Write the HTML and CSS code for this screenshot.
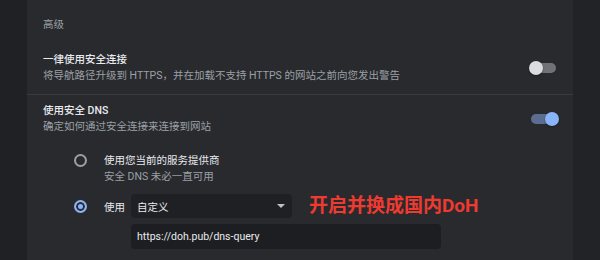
FILE: index.html
```html
<!DOCTYPE html>
<html lang="zh-CN">
<head>
  <meta charset="UTF-8">
  <title>隐私设置 - 高级</title>
  <link rel="stylesheet" href="styles.css">
</head>
<body>
  <div class="page">
    <div class="side"></div>

    <div class="card">
      <div class="section-title">高级</div>

      <div class="row">
        <div class="row-text">
          <div class="label">一律使用安全连接</div>
          <div class="sub">将导航路径升级到 HTTPS，并在加载不支持 HTTPS 的网站之前向您发出警告</div>
        </div>
        <span class="toggle"></span>
      </div>

      <div class="row divided">
        <div class="row-text">
          <div class="label">使用安全 DNS</div>
          <div class="sub">确定如何通过安全连接来连接到网站</div>
        </div>
        <span class="toggle on"></span>
      </div>

      <div class="dns-options">
        <div class="option">
          <span class="radio"></span>
          <div class="row-text">
            <div class="label plain">使用您当前的服务提供商</div>
            <div class="sub">安全 DNS 未必一直可用</div>
          </div>
        </div>

        <div class="option custom">
          <span class="radio checked"></span>
          <div class="custom-grid">
            <span class="label plain">使用</span>
            <div class="select-row">
              <div class="select">
                <span>自定义</span>
                <span class="arrow"></span>
              </div>
              <span class="note">开启并换成国内DoH</span>
            </div>
            <div class="input">https://doh.pub/dns-query</div>
          </div>
        </div>
      </div>
    </div>

    <div class="side right"></div>
  </div>
</body>
</html>
```

FILE: styles.css
```css
body {
  margin: 0;
  background-color: #202124;
  font-family: Roboto, "Noto Sans CJK SC", sans-serif;
  font-size: 10.5px;
  color: #e8eaed;
}

.page {
  display: flex;
  height: 260px;
  overflow: hidden;
}

.side {
  width: 27px;
  flex-shrink: 0;
  background-color: #202124;
}

.side.right {
  background-color: #222326;
}

.card {
  flex: 1;
  background-color: #292a2d;
}

.section-title {
  color: #9aa0a6;
  padding: 17px 16px 7px;
  line-height: 16px;
}

.row {
  display: flex;
  align-items: center;
  justify-content: space-between;
  padding: 12px 16px 10px;
}

.row.divided {
  border-top: 1px solid #3a3b3e;
  padding-top: 8px;
  padding-bottom: 8px;
}

.row-text {
  line-height: 16px;
}

.label {
  font-weight: 500;
  color: #e8eaed;
}

.label.plain {
  font-weight: 400;
}

.sub {
  color: #9aa0a6;
}

.toggle {
  position: relative;
  width: 26px;
  height: 10px;
  border-radius: 5px;
  background-color: #6f7378;
  margin-right: 1px;
}

.toggle::after {
  content: "";
  position: absolute;
  top: -2px;
  left: -1px;
  width: 14px;
  height: 14px;
  border-radius: 50%;
  background-color: #dadce0;
  box-shadow: 0 1px 2px rgba(0, 0, 0, 0.4);
}

.toggle.on {
  background-color: #5b6e92;
  margin-right: 0;
}

.toggle.on::after {
  left: auto;
  right: -2px;
  background-color: #8ab4f8;
}

.dns-options {
  padding: 10px 16px 0 47px;
}

.option {
  display: flex;
  align-items: flex-start;
  gap: 17px;
}

.option.custom {
  margin-top: 9px;
}

.radio {
  width: 9px;
  height: 9px;
  border: 2px solid #9aa0a6;
  border-radius: 50%;
  margin-top: 1px;
  flex-shrink: 0;
}

.radio.checked {
  border-color: #8ab4f8;
  background-color: #8ab4f8;
  box-shadow: inset 0 0 0 2px #292a2d;
  margin-top: 6px;
}

.custom-grid {
  display: grid;
  grid-template-columns: auto auto;
  column-gap: 6px;
  row-gap: 6px;
  align-items: center;
}

.select-row {
  display: flex;
  align-items: center;
  gap: 17px;
}

.select {
  display: flex;
  align-items: center;
  justify-content: space-between;
  width: 148px;
  height: 24px;
  padding: 0 7px 0 6px;
  border-radius: 4px;
  background-color: #1f2023;
}

.arrow {
  width: 0;
  height: 0;
  border-left: 4px solid transparent;
  border-right: 4px solid transparent;
  border-top: 4px solid #bdc1c6;
}

.note {
  color: #ef3a31;
  font-size: 19px;
  font-weight: 700;
  line-height: 24px;
}

.input {
  grid-column: 2;
  width: 298px;
  height: 25px;
  line-height: 25px;
  padding: 0 6px;
  border-radius: 4px;
  background-color: #1d1e21;
}
```
